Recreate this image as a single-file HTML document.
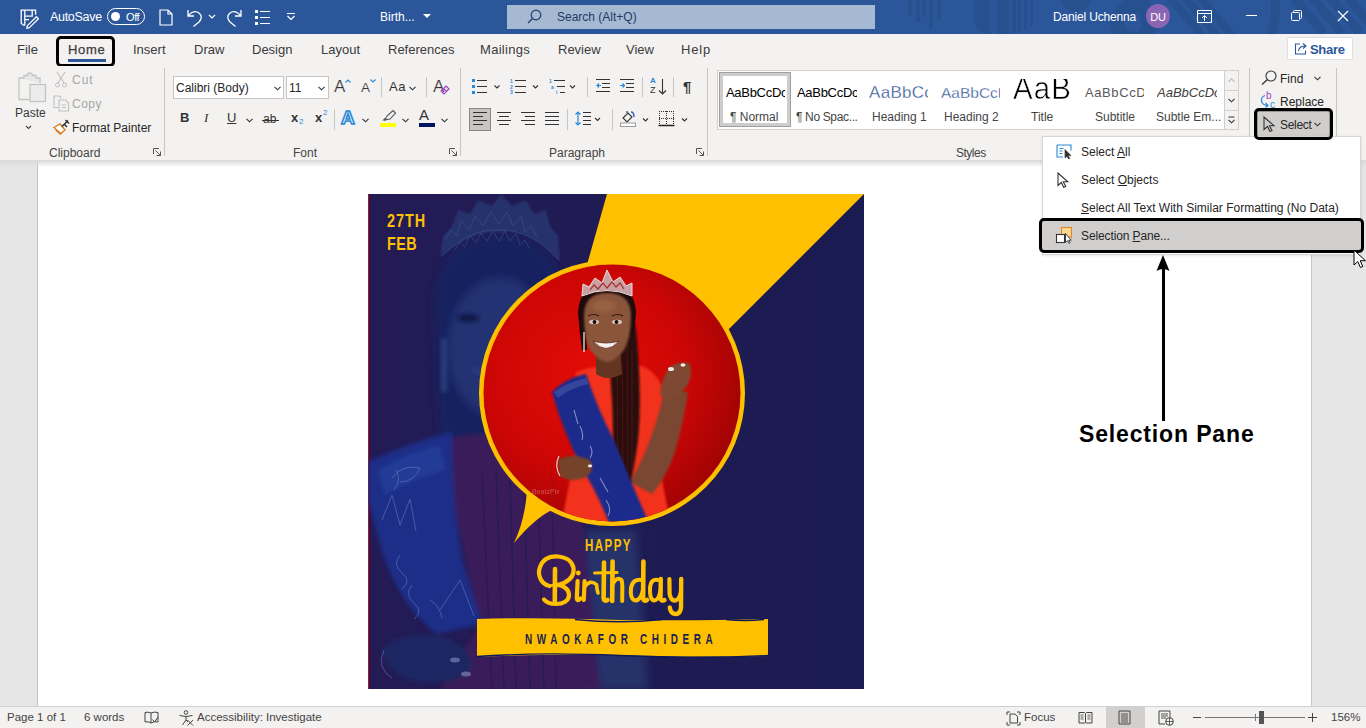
<!DOCTYPE html>
<html><head><meta charset="utf-8">
<style>
*{margin:0;padding:0;box-sizing:border-box}
html,body{width:1366px;height:728px;overflow:hidden;background:#e6e6e6;font-family:"Liberation Sans",sans-serif}
.a{position:absolute}
.t{position:absolute;white-space:nowrap;font-family:"Liberation Sans",sans-serif;font-size:12px;line-height:14px;color:#262626}
#title{left:0;top:0;width:1366px;height:34px;background:#2b579a;overflow:hidden}
#tabs{left:0;top:34px;width:1366px;height:32px;background:#f3f2f1}
#ribbon{left:0;top:66px;width:1366px;height:95px;background:#f3f2f1;border-bottom:1px solid #dadada}
#doc{left:0;top:161px;width:1366px;height:545px;background:#e6e6e6;overflow:hidden}
#page{left:37px;top:0;width:1275px;height:545px;background:#fff;border-left:1px solid #c6c6c6;border-right:1px solid #c6c6c6}
#status{left:0;top:706px;width:1366px;height:22px;background:#f3f2f1;border-top:1px solid #d0d0d0}
.w{color:#fff}
svg{position:absolute;overflow:visible}
</style></head><body>
<div id="title" class="a">
 <!-- pattern -->
 <div class="a" style="left:908px;top:0;width:4px;height:16px;background:#27508e"></div>
 <div class="a" style="left:916px;top:0;width:4px;height:22px;background:#27508e"></div>
 <div class="a" style="left:922px;top:0;width:4px;height:17px;background:#27508e"></div>
 <div class="a" style="left:929px;top:0;width:4px;height:29px;background:#27508e"></div>
 <div class="a" style="left:937px;top:0;width:4px;height:20px;background:#27508e"></div>
 <div class="a" style="left:974px;top:0;width:16px;height:34px;background:#27508e;border-radius:0 0 0 14px"></div>
 <div class="a" style="left:997px;top:0;width:12px;height:34px;background:#27508e"></div>
 <div class="a" style="left:1012px;top:0;width:4px;height:34px;background:#27508e"></div>
 <div class="a" style="left:1018px;top:0;width:3px;height:32px;background:#27508e"></div>
 <div class="a" style="left:1024px;top:0;width:3px;height:30px;background:#27508e"></div>
 <div class="a" style="left:1030px;top:0;width:3px;height:26px;background:#27508e"></div>
 <div class="a" style="left:1062px;top:-14px;width:28px;height:26px;border-radius:50%;background:#27508e"></div>
 <div class="a" style="left:1110px;top:-1px;width:47px;height:47px;border-radius:50%;border:14px solid #27508e"></div>
 <div class="a" style="left:1140px;top:-60px;width:140px;height:140px;border-radius:50%;border:9px solid #27508e"></div>
 <div class="a" style="left:1185px;top:-10px;width:8px;height:60px;background:#27508e;transform:rotate(-40deg)"></div>
 <div class="a" style="left:1200px;top:-10px;width:8px;height:60px;background:#27508e;transform:rotate(-40deg)"></div>
 <div class="a" style="left:1215px;top:-10px;width:8px;height:60px;background:#27508e;transform:rotate(-40deg)"></div>
 <div class="a" style="left:1300px;top:-20px;width:9px;height:60px;background:#27508e;transform:rotate(-40deg)"></div>
 <div class="a" style="left:1318px;top:-20px;width:9px;height:60px;background:#27508e;transform:rotate(-40deg)"></div>
 <div class="a" style="left:1336px;top:-20px;width:9px;height:60px;background:#27508e;transform:rotate(-40deg)"></div>
 <div class="a" style="left:1354px;top:-20px;width:9px;height:60px;background:#27508e;transform:rotate(-40deg)"></div>
 <!-- save icon -->
 <svg style="left:14px;top:4px" width="30" height="26" viewBox="0 0 30 26"><path d="M21.6 10.8V6.2H7.2V19.2L9.4 21.2H11.2M10.8 6.2V12.2H18.2V6.2M10.8 12.2V21M11 15.6H15" fill="none" stroke="#fff" stroke-width="1.3"/><path d="M13.4 21.6L22.4 12.8L24.4 14.8L15.4 23.6L12.8 24.4Z" fill="none" stroke="#fff" stroke-width="1.3" stroke-linejoin="round"/></svg>
 <div class="t w" style="left:50px;top:10px;font-size:12.5px;letter-spacing:-0.3px">AutoSave</div>
 <div class="a" style="left:107px;top:8px;width:38px;height:17px;border:1.2px solid #fff;border-radius:9px"></div>
 <div class="a" style="left:111px;top:12px;width:9px;height:9px;border-radius:50%;background:#fff"></div>
 <div class="t w" style="left:126px;top:10px;font-size:11px;letter-spacing:-0.4px">Off</div>
 <!-- new doc -->
 <svg style="left:159px;top:9px" width="14" height="17" viewBox="0 0 14 17"><path d="M1 1h8l4 4v11H1z M9 1v4h4" fill="none" stroke="#fff" stroke-width="1.2"/></svg>
 <!-- undo -->
 <svg style="left:187px;top:9px" width="16" height="18" viewBox="0 0 16 18"><path d="M1 1v6h6 M1.5 6.5 C4 2.5 9 1.5 12 4 C15 6.5 15 10 12 13 L6.5 17.5" fill="none" stroke="#fff" stroke-width="1.3"/></svg>
 <svg style="left:208px;top:14px" width="8" height="5" viewBox="0 0 8 5"><path d="M1 1l3 3 3-3" fill="none" stroke="#fff" stroke-width="1.2"/></svg>
 <!-- redo -->
 <svg style="left:226px;top:9px" width="16" height="18" viewBox="0 0 16 18"><path d="M15 1v6H9 M14.5 6.5 C12 2.5 7 1.5 4 4 C1 6.5 1 10 4 13 L9.5 17.5" fill="none" stroke="#fff" stroke-width="1.3"/></svg>
 <!-- list -->
 <svg style="left:254px;top:9px" width="17" height="17" viewBox="0 0 17 17"><path d="M1 1h3v3H1z M1 7h3v3H1z M1 13h3v3H1z" fill="#fff"/><path d="M6 2.5h10 M6 8.5h10 M6 14.5h10" stroke="#fff" stroke-width="1.2"/></svg>
 <svg style="left:286px;top:12px" width="10" height="9" viewBox="0 0 10 9"><path d="M1 1.5h8 M1.5 4l3.5 3.5 3.5-3.5" fill="none" stroke="#fff" stroke-width="1.2"/></svg>
 <div class="t w" style="left:380px;top:10px;font-size:12px">Birth...</div>
 <svg style="left:423px;top:14px" width="8" height="5" viewBox="0 0 8 5"><path d="M0 0h8L4 4z" fill="#fff"/></svg>
 <!-- search -->
 <div class="a" style="left:507px;top:5px;width:368px;height:24px;background:#a5b9d3"></div>
 <svg style="left:527px;top:9px" width="15" height="15" viewBox="0 0 15 15"><circle cx="9" cy="6" r="4.8" fill="none" stroke="#1e3d6e" stroke-width="1.2"/><path d="M5.5 9.5L1 14" stroke="#1e3d6e" stroke-width="1.3"/></svg>
 <div class="t" style="left:557px;top:10px;font-size:12px;color:#1f3a66">Search (Alt+Q)</div>
 <div class="t w" style="left:1053px;top:10px;font-size:12px;letter-spacing:-0.17px">Daniel Uchenna</div>
 <div class="a" style="left:1146px;top:4px;width:24px;height:24px;border-radius:50%;background:#8c64b4"></div>
 <div class="t w" style="left:1146px;top:10px;width:24px;text-align:center;font-size:11px;letter-spacing:-0.3px">DU</div>
 <svg style="left:1197px;top:10px" width="15" height="13" viewBox="0 0 15 13"><path d="M0.5 0.5h14v12H0.5z" fill="none" stroke="#fff" stroke-width="1"/><path d="M0.5 3.5h14" stroke="#fff" stroke-width="1"/><path d="M7.5 11V5.5M5 8l2.5-2.5L10 8" fill="none" stroke="#fff" stroke-width="1"/></svg>
 <div class="a" style="left:1246px;top:15px;width:11px;height:1px;background:#fff"></div>
 <svg style="left:1291px;top:10px" width="12" height="12" viewBox="0 0 12 12"><rect x="0.5" y="2.5" width="8" height="8" rx="1" fill="none" stroke="#fff" stroke-width="1"/><path d="M2.5 2.5V1.5a1 1 0 0 1 1-1h6a1 1 0 0 1 1 1v6a1 1 0 0 1-1 1H8.5" fill="none" stroke="#fff" stroke-width="1"/></svg>
 <svg style="left:1337px;top:10px" width="12" height="12" viewBox="0 0 12 12"><path d="M1 1l10 10M11 1L1 11" stroke="#fff" stroke-width="1.2"/></svg>
</div>
<div id="tabs" class="a">
 <div class="t" style="left:17px;top:9px;font-size:13px;color:#3b3b3b">File</div>
 <div class="t" style="left:68px;top:9px;font-size:13px;color:#3b3b3b;letter-spacing:0.7px;-webkit-text-stroke:0.25px #3b3b3b">Home</div>
 <div class="a" style="left:68px;top:25px;width:38px;height:3px;background:#2b579a"></div>
 <div class="a" style="left:56px;top:2px;width:59px;height:31px;border:3px solid #000;border-radius:5px"></div>
 <div class="t" style="left:133px;top:9px;font-size:13px;color:#3b3b3b">Insert</div>
 <div class="t" style="left:194px;top:9px;font-size:13px;color:#3b3b3b">Draw</div>
 <div class="t" style="left:252px;top:9px;font-size:13px;color:#3b3b3b">Design</div>
 <div class="t" style="left:321px;top:9px;font-size:13px;color:#3b3b3b">Layout</div>
 <div class="t" style="left:388px;top:9px;font-size:13px;color:#3b3b3b">References</div>
 <div class="t" style="left:480px;top:9px;font-size:13px;color:#3b3b3b;letter-spacing:0.3px">Mailings</div>
 <div class="t" style="left:558px;top:9px;font-size:13px;color:#3b3b3b">Review</div>
 <div class="t" style="left:626px;top:9px;font-size:13px;color:#3b3b3b">View</div>
 <div class="t" style="left:681px;top:9px;font-size:13px;color:#3b3b3b;letter-spacing:0.8px">Help</div>
 <div class="a" style="left:1287px;top:3px;width:66px;height:23px;background:#fff;border:1px solid #e1dfdd;border-radius:2px"></div>
 <svg style="left:1294px;top:8px" width="14" height="13" viewBox="0 0 14 13"><path d="M6 2H1.5v10h10V8.5" fill="none" stroke="#2b579a" stroke-width="1.1"/><path d="M4.5 9C5 5.5 7.5 4 11 4M9 1.5L12 4 9 6.5" fill="none" stroke="#2b579a" stroke-width="1.1"/></svg>
 <div class="t" style="left:1310px;top:9px;font-size:13px;color:#2b579a;font-weight:bold;letter-spacing:-0.3px">Share</div>
</div>
<div id="ribbon" class="a">
 <!-- Clipboard -->
 <svg style="left:17px;top:6px" width="30" height="31" viewBox="0 0 30 31"><path d="M2 6h5V3.5h3.5a2.5 2.5 0 0 1 5 0H19V6h4v5" fill="#e8e8e8" stroke="#c4c4c4" stroke-width="1.3"/><path d="M2 6v21.5h10" fill="none" stroke="#c4c4c4" stroke-width="1.3"/><rect x="13" y="12.5" width="15.5" height="17" fill="#ececec" stroke="#c4c4c4" stroke-width="1.3"/></svg>
 <div class="t" style="left:15px;top:40px;font-size:12px;color:#3a3a3a">Paste</div>
 <svg style="left:25px;top:59px" width="7" height="5" viewBox="0 0 7 5"><path d="M1 1l2.5 2.5L6 1" fill="none" stroke="#444" stroke-width="1.1"/></svg>
 <svg style="left:55px;top:5px" width="12" height="17" viewBox="0 0 12 17"><path d="M2 1l7 11M10 1L3 12" stroke="#c0c0c0" stroke-width="1.1" fill="none"/><circle cx="2.5" cy="14" r="2" fill="none" stroke="#c0c0c0"/><circle cx="9.5" cy="14" r="2" fill="none" stroke="#c0c0c0"/></svg>
 <div class="t" style="left:72px;top:7px;font-size:12px;color:#a6a6a6;letter-spacing:1px">Cut</div>
 <svg style="left:53px;top:29px" width="17" height="17" viewBox="0 0 17 17"><path d="M5 12.5H1V1h5.5l2 2" fill="none" stroke="#c0c0c0" stroke-width="1.1"/><path d="M6 5h6.5l3 3v8H6z M8.5 10h4.5M8.5 12.5h4.5" fill="none" stroke="#c0c0c0" stroke-width="1.1"/></svg>
 <div class="t" style="left:72px;top:31px;font-size:12px;color:#a6a6a6;letter-spacing:0.5px">Copy</div>
 <svg style="left:53px;top:53px" width="17" height="16" viewBox="0 0 17 16"><path d="M1 8.5L7 5l5 6-4.5 4z" fill="#fff" stroke="#e07b20" stroke-width="1.4"/><path d="M3 11l5 4" stroke="#e07b20" stroke-width="2"/><path d="M9 7.5L15 1.5M11 5l3 3" stroke="#333" stroke-width="1.5"/><path d="M12.5 1l3.5 3.5" stroke="#333" stroke-width="1.5"/></svg>
 <div class="t" style="left:72px;top:55px;font-size:12px;color:#262626">Format Painter</div>
 <div class="t" style="left:49px;top:80px;font-size:12px;color:#444">Clipboard</div>
 <svg style="left:153px;top:82px" width="8" height="8" viewBox="0 0 8 8"><path d="M0.5 6V0.5H6M2.5 2.5l5 5M7.5 3.5v4h-4" fill="none" stroke="#555" stroke-width="1"/></svg>
 <div class="a" style="left:164px;top:2px;width:1px;height:88px;background:#c8c6c4"></div>
 <!-- Font -->
 <div class="a" style="left:173px;top:10px;width:111px;height:23px;background:#fff;border:1px solid #c8c6c4"></div>
 <div class="t" style="left:176px;top:15px;font-size:12px;color:#262626">Calibri (Body)</div>
 <svg style="left:274px;top:20px" width="7" height="5" viewBox="0 0 7 5"><path d="M0.5 0.8l3 3 3-3" fill="none" stroke="#333" stroke-width="1.1"/></svg>
 <div class="a" style="left:286px;top:10px;width:43px;height:23px;background:#fff;border:1px solid #c8c6c4"></div>
 <div class="t" style="left:289px;top:15px;font-size:12px;color:#262626">11</div>
 <svg style="left:318px;top:20px" width="7" height="5" viewBox="0 0 7 5"><path d="M0.5 0.8l3 3 3-3" fill="none" stroke="#333" stroke-width="1.1"/></svg>
 <div class="t" style="left:334px;top:12px;font-size:17px;line-height:18px;color:#333;-webkit-text-stroke:0.2px #f3f2f1">A</div>
 <svg style="left:345px;top:13px" width="6" height="4" viewBox="0 0 6 4"><path d="M0.5 3.5L3 1l2.5 2.5" fill="none" stroke="#2b88d8" stroke-width="1.1"/></svg>
 <div class="t" style="left:361px;top:15px;font-size:13.5px;color:#333;-webkit-text-stroke:0.15px #f3f2f1">A</div>
 <svg style="left:370px;top:13px" width="6" height="4" viewBox="0 0 6 4"><path d="M0.5 0.5L3 3l2.5-2.5" fill="none" stroke="#2b88d8" stroke-width="1.1"/></svg>
 <div class="a" style="left:381px;top:11px;width:1px;height:20px;background:#c8c6c4"></div>
 <div class="t" style="left:389px;top:14px;font-size:13px;color:#333;letter-spacing:0.5px">Aa</div>
 <svg style="left:409px;top:20px" width="7" height="5" viewBox="0 0 7 5"><path d="M0.5 0.8l3 3 3-3" fill="none" stroke="#333" stroke-width="1.1"/></svg>
 <div class="a" style="left:426px;top:11px;width:1px;height:20px;background:#c8c6c4"></div>
 <div class="t" style="left:433px;top:12px;font-size:17px;line-height:18px;color:#333;-webkit-text-stroke:0.2px #f3f2f1">A</div>
 <svg style="left:440px;top:19px" width="10" height="10" viewBox="0 0 10 10"><path d="M6 1l3 3-5 5-3-3z M3.5 3.5l3 3" fill="none" stroke="#a33fbf" stroke-width="1.2"/></svg>
 <div class="t" style="left:180px;top:45px;font-size:13px;font-weight:bold;color:#333">B</div>
 <div class="t" style="left:204px;top:45px;font-size:13px;font-style:italic;color:#333;font-family:'Liberation Serif',serif">I</div>
 <div class="t" style="left:227px;top:45px;font-size:13px;color:#333;text-decoration:underline">U</div>
 <svg style="left:246px;top:52px" width="7" height="5" viewBox="0 0 7 5"><path d="M0.5 0.8l3 3 3-3" fill="none" stroke="#333" stroke-width="1.1"/></svg>
 <div class="t" style="left:263px;top:46px;font-size:12px;color:#333">ab</div>
 <div class="a" style="left:262px;top:54px;width:17px;height:1px;background:#333"></div>
 <div class="t" style="left:291px;top:45px;font-size:13px;color:#333;font-weight:bold">x</div>
 <div class="t" style="left:299px;top:52px;font-size:8px;color:#2b88d8;line-height:8px">2</div>
 <div class="t" style="left:315px;top:45px;font-size:13px;color:#333;font-weight:bold">x</div>
 <div class="t" style="left:323px;top:43px;font-size:8px;color:#2b88d8;line-height:8px">2</div>
 <div class="a" style="left:334px;top:43px;width:1px;height:21px;background:#c8c6c4"></div>
 <div class="t" style="left:341px;top:42px;font-size:19px;line-height:20px;font-weight:bold;color:#fff;-webkit-text-stroke:1.6px #2b88d8">A</div>
 <svg style="left:362px;top:52px" width="7" height="5" viewBox="0 0 7 5"><path d="M0.5 0.8l3 3 3-3" fill="none" stroke="#333" stroke-width="1.1"/></svg>
 <svg style="left:381px;top:44px" width="16" height="11" viewBox="0 0 16 11"><path d="M4 10l2-4 6-5.5 2.5 2.5L9 9z" fill="none" stroke="#555" stroke-width="1.1"/><path d="M1.5 10.5h3l1-1.5-2-1z" fill="#555"/></svg>
 <div class="a" style="left:380px;top:57px;width:16px;height:4px;background:#ffff00"></div>
 <svg style="left:402px;top:52px" width="7" height="5" viewBox="0 0 7 5"><path d="M0.5 0.8l3 3 3-3" fill="none" stroke="#333" stroke-width="1.1"/></svg>
 <div class="t" style="left:419px;top:42px;font-size:15px;color:#333">A</div>
 <div class="a" style="left:419px;top:57px;width:16px;height:4px;background:#001560"></div>
 <svg style="left:441px;top:52px" width="7" height="5" viewBox="0 0 7 5"><path d="M0.5 0.8l3 3 3-3" fill="none" stroke="#333" stroke-width="1.1"/></svg>
 <div class="t" style="left:293px;top:80px;font-size:12px;color:#444">Font</div>
 <svg style="left:449px;top:82px" width="8" height="8" viewBox="0 0 8 8"><path d="M0.5 6V0.5H6M2.5 2.5l5 5M7.5 3.5v4h-4" fill="none" stroke="#555" stroke-width="1"/></svg>
 <div class="a" style="left:460px;top:2px;width:1px;height:88px;background:#c8c6c4"></div>
 <!-- Paragraph -->
 <svg style="left:471px;top:12px" width="30" height="16" viewBox="0 0 30 16"><path d="M1 1h3v3H1zM1 7h3v3H1zM1 13h3v3H1z" fill="#2b88d8"/><path d="M6 2.5h10M6 8.5h10M6 14.5h10" stroke="#333" stroke-width="1"/><path d="M23.5 7.5l2.5 2.5 2.5-2.5" fill="none" stroke="#333" stroke-width="1.1"/></svg>
 <svg style="left:510px;top:12px" width="30" height="16" viewBox="0 0 30 16"><text x="0" y="5" font-size="5" fill="#2b88d8" font-family="Liberation Sans" font-weight="bold">1</text><text x="0" y="10.5" font-size="5" fill="#2b88d8" font-family="Liberation Sans" font-weight="bold">2</text><text x="0" y="16" font-size="5" fill="#2b88d8" font-family="Liberation Sans" font-weight="bold">3</text><path d="M5 2.5h11M5 8.5h11M5 14.5h11" stroke="#333" stroke-width="1"/><path d="M23 7.5l2.5 2.5 2.5-2.5" fill="none" stroke="#333" stroke-width="1.1"/></svg>
 <svg style="left:549px;top:12px" width="30" height="16" viewBox="0 0 30 16"><text x="0" y="5" font-size="5" fill="#2b88d8" font-family="Liberation Sans" font-weight="bold">1</text><text x="2" y="11" font-size="5" fill="#2b88d8" font-family="Liberation Sans" font-weight="bold">a</text><text x="7" y="16" font-size="5" fill="#2b88d8" font-family="Liberation Sans" font-weight="bold">i</text><path d="M5 2.5h11M8 8.5h8M11 14.5h5" stroke="#333" stroke-width="1"/><path d="M21 7.5l2.5 2.5 2.5-2.5" fill="none" stroke="#333" stroke-width="1.1"/></svg>
 <div class="a" style="left:587px;top:11px;width:1px;height:20px;background:#c8c6c4"></div>
 <svg style="left:596px;top:13px" width="15" height="14" viewBox="0 0 15 14"><path d="M0 0.5h14M6 4.5h8M6 8.5h8M0 12.5h14" stroke="#333" stroke-width="1"/><path d="M5 6.5H1M3 4.5L1 6.5l2 2" fill="none" stroke="#2b88d8" stroke-width="1.2"/></svg>
 <svg style="left:620px;top:13px" width="15" height="14" viewBox="0 0 15 14"><path d="M0 0.5h14M6 4.5h8M6 8.5h8M0 12.5h14" stroke="#333" stroke-width="1"/><path d="M0 6.5h4.5M2.5 4.5l2 2-2 2" fill="none" stroke="#2b88d8" stroke-width="1.2"/></svg>
 <div class="a" style="left:642px;top:11px;width:1px;height:20px;background:#c8c6c4"></div>
 <div class="t" style="left:650px;top:11px;font-size:8px;line-height:8px;color:#2b88d8;font-weight:bold">A</div>
 <div class="t" style="left:650px;top:20px;font-size:9px;line-height:9px;color:#333">Z</div>
 <svg style="left:658px;top:13px" width="9" height="16" viewBox="0 0 9 16"><path d="M4.5 0v15M1 11.5l3.5 3.5 3.5-3.5" fill="none" stroke="#333" stroke-width="1.1"/></svg>
 <div class="a" style="left:673px;top:11px;width:1px;height:20px;background:#c8c6c4"></div>
 <div class="t" style="left:683px;top:13px;font-size:15px;line-height:15px;color:#333;font-weight:bold">¶</div>
 <div class="a" style="left:469px;top:42px;width:22px;height:23px;background:#c8c6c4;border:1px solid #8a8886"></div>
 <svg style="left:473px;top:46px" width="100" height="14" viewBox="0 0 100 14"><path d="M0 0.5h14M0 4.5h10M0 8.5h14M0 12.5h10" stroke="#333" stroke-width="1"/><path d="M24 0.5h14M26 4.5h10M24 8.5h14M26 12.5h10" stroke="#333" stroke-width="1"/><path d="M48 0.5h14M52 4.5h10M48 8.5h14M52 12.5h10" stroke="#333" stroke-width="1"/><path d="M72 0.5h14M72 4.5h14M72 8.5h14M72 12.5h14" stroke="#333" stroke-width="1"/></svg>
 <div class="a" style="left:567px;top:43px;width:1px;height:21px;background:#c8c6c4"></div>
 <svg style="left:574px;top:45px" width="28" height="16" viewBox="0 0 28 16"><path d="M4 1v13M1.5 3.5L4 1l2.5 2.5M1.5 11.5L4 14l2.5-2.5" fill="none" stroke="#2b88d8" stroke-width="1.2"/><path d="M9 1.5h8M9 5.5h8M9 9.5h8M9 13.5h8" stroke="#333" stroke-width="1"/><path d="M21 7l2.5 2.5L26 7" fill="none" stroke="#333" stroke-width="1.1"/></svg>
 <div class="a" style="left:612px;top:43px;width:1px;height:21px;background:#c8c6c4"></div>
 <svg style="left:619px;top:44px" width="32" height="18" viewBox="0 0 32 18"><path d="M4 8l5-5 4 4-5 5z" fill="none" stroke="#333" stroke-width="1.1"/><path d="M8 3V1" stroke="#333" stroke-width="1.1"/><path d="M12 2c2 0 3 2 3 5" fill="none" stroke="#2b6cb8" stroke-width="1.5"/><rect x="1.5" y="13" width="15" height="3.5" fill="#fff" stroke="#999" stroke-width="1"/><path d="M24 8.5l2.5 2.5L29 8.5" fill="none" stroke="#333" stroke-width="1.1"/></svg>
 <svg style="left:658px;top:44px" width="32" height="18" viewBox="0 0 32 18"><path d="M1 1.5h15M1.5 1v14M15.5 1v14M1 8.5h15M8.5 1v14" fill="none" stroke="#333" stroke-width="1" stroke-dasharray="1 1"/><path d="M0.5 15.5h16" stroke="#222" stroke-width="1.5"/><path d="M24 8.5l2.5 2.5L29 8.5" fill="none" stroke="#333" stroke-width="1.1"/></svg>
 <div class="t" style="left:549px;top:80px;font-size:12px;color:#444">Paragraph</div>
 <svg style="left:696px;top:82px" width="8" height="8" viewBox="0 0 8 8"><path d="M0.5 6V0.5H6M2.5 2.5l5 5M7.5 3.5v4h-4" fill="none" stroke="#555" stroke-width="1"/></svg>
 <div class="a" style="left:707px;top:2px;width:1px;height:88px;background:#c8c6c4"></div>
 <!-- Styles -->
 <div class="a" style="left:717px;top:4px;width:522px;height:60px;background:#fff;border:1px solid #d2d0ce"></div>
 <div class="a" style="left:719px;top:6px;width:72px;height:55px;border:1px solid #a19f9d;background:#fff"></div>
 <div class="a" style="left:720px;top:7px;width:70px;height:53px;border:3px solid #cfcdcb"></div>
 <div class="t" style="left:726px;top:20px;font-size:13px;color:#000;width:59px;overflow:hidden;letter-spacing:-0.3px">AaBbCcDc</div>
 <div class="t" style="left:730px;top:44px;font-size:12px;color:#444">¶ Normal</div>
 <div class="t" style="left:797px;top:20px;font-size:13px;color:#000;width:60px;overflow:hidden;letter-spacing:-0.3px">AaBbCcDc</div>
 <div class="t" style="left:796px;top:44px;font-size:12px;color:#444;letter-spacing:-0.35px">¶ No Spac...</div>
 <div class="t" style="left:869px;top:18px;font-size:17px;line-height:18px;color:#2f5496;width:59px;overflow:hidden;-webkit-text-stroke:0.3px #fff;letter-spacing:0.3px">AaBbCc</div>
 <div class="t" style="left:872px;top:44px;font-size:12px;color:#444">Heading 1</div>
 <div class="t" style="left:941px;top:18px;font-size:15.5px;line-height:17px;color:#2f5496;width:59px;overflow:hidden;-webkit-text-stroke:0.3px #fff">AaBbCcD</div>
 <div class="t" style="left:944px;top:44px;font-size:12px;color:#444">Heading 2</div>
 <div class="a" style="left:1010px;top:13px;width:64px;height:22px;overflow:hidden"><div class="t" style="left:3px;top:-7px;font-size:32px;line-height:32px;color:#000;letter-spacing:1.2px;transform:scaleX(0.92);transform-origin:0 0;-webkit-text-stroke:0.6px #fff">AaB</div></div>
 <div class="t" style="left:1031px;top:44px;font-size:12px;color:#444">Title</div>
 <div class="t" style="left:1085px;top:20px;font-size:13px;color:#595959;letter-spacing:0.6px;width:59px;overflow:hidden">AaBbCcD</div>
 <div class="t" style="left:1095px;top:44px;font-size:12px;color:#444">Subtitle</div>
 <div class="t" style="left:1157px;top:20px;font-size:13px;color:#404040;font-style:italic;width:60px;overflow:hidden">AaBbCcDc</div>
 <div class="t" style="left:1156px;top:44px;font-size:12px;color:#444">Subtle Em...</div>
 <div class="a" style="left:1224px;top:4px;width:15px;height:60px;background:#f3f2f1;border:1px solid #d2d0ce"></div>
 <div class="a" style="left:1224px;top:24px;width:15px;height:1px;background:#d2d0ce"></div>
 <div class="a" style="left:1224px;top:44px;width:15px;height:1px;background:#d2d0ce"></div>
 <svg style="left:1228px;top:12px" width="7" height="5" viewBox="0 0 7 5"><path d="M0.5 3.8l3-3 3 3" fill="none" stroke="#bbb" stroke-width="1.1"/></svg>
 <svg style="left:1228px;top:32px" width="7" height="5" viewBox="0 0 7 5"><path d="M0.5 0.8l3 3 3-3" fill="none" stroke="#333" stroke-width="1.1"/></svg>
 <svg style="left:1228px;top:50px" width="7" height="8" viewBox="0 0 7 8"><path d="M0.5 1h6M0.5 3.8l3 3 3-3" fill="none" stroke="#333" stroke-width="1.1"/></svg>
 <div class="t" style="left:956px;top:80px;font-size:12px;color:#444;letter-spacing:-0.5px">Styles</div>
 <div class="a" style="left:1249px;top:2px;width:1px;height:88px;background:#c8c6c4"></div>
 <!-- Editing -->
 <svg style="left:1261px;top:4px" width="16" height="15" viewBox="0 0 16 15"><circle cx="10" cy="6" r="5" fill="none" stroke="#333" stroke-width="1.1"/><path d="M6.5 9.5L1 14.5" stroke="#333" stroke-width="1.3"/></svg>
 <div class="t" style="left:1280px;top:6px;font-size:12px;color:#262626">Find</div>
 <svg style="left:1314px;top:10px" width="7" height="5" viewBox="0 0 7 5"><path d="M0.5 0.8l3 3 3-3" fill="none" stroke="#333" stroke-width="1.1"/></svg>
 <svg style="left:1259px;top:25px" width="20" height="18" viewBox="0 0 20 18"><text x="7" y="8" font-family="Liberation Sans" font-size="10" fill="#a33fbf">b</text><text x="11" y="16.5" font-family="Liberation Sans" font-size="10" fill="#2b88d8">c</text><path d="M6 4.5Q2 6 2.5 10Q3 14 8.5 14.5" fill="none" stroke="#2b88d8" stroke-width="1.3"/><path d="M6.5 12l2.5 2.5-2.5 2" fill="none" stroke="#2b88d8" stroke-width="1.2"/></svg>
 <div class="t" style="left:1280px;top:29px;font-size:12px;color:#262626">Replace</div>
 <div class="a" style="left:1257px;top:45px;width:73px;height:26px;background:#cfcecd;border:1px solid #9a9896"></div>
 <svg style="left:1263px;top:50px" width="13" height="16" viewBox="0 0 13 16"><path d="M1 1v12.5l3.5-3 2.5 5 2-1-2.5-4.8h4.5z" fill="none" stroke="#333" stroke-width="1.1"/></svg>
 <div class="t" style="left:1280px;top:52px;font-size:12px;color:#262626;letter-spacing:-0.3px">Select</div>
 <svg style="left:1314px;top:56px" width="7" height="5" viewBox="0 0 7 5"><path d="M0.5 0.8l3 3 3-3" fill="none" stroke="#333" stroke-width="1.1"/></svg>
 <div class="a" style="left:1336px;top:2px;width:1px;height:88px;background:#c8c6c4"></div>
</div>
<div id="doc" class="a"><div id="page" class="a"></div>
 <div class="a" style="left:0;top:0;width:1366px;height:6px;background:linear-gradient(#dcdcdc,rgba(255,255,255,0))"></div>
</div>
<svg style="left:368px;top:194px" width="496" height="495" viewBox="368 194 496 495">
 <defs>
  <filter id="b2" x="-20%" y="-20%" width="140%" height="140%"><feGaussianBlur stdDeviation="2"/></filter>
  <filter id="b4" x="-30%" y="-30%" width="160%" height="160%"><feGaussianBlur stdDeviation="4"/></filter>
  <filter id="b8" x="-50%" y="-50%" width="200%" height="200%"><feGaussianBlur stdDeviation="8"/></filter>
  <filter id="b1"><feGaussianBlur stdDeviation="0.8"/></filter>
  <radialGradient id="red" cx="0.4" cy="0.42" r="0.7"><stop offset="0" stop-color="#e20c06"/><stop offset="0.55" stop-color="#cc0605"/><stop offset="1" stop-color="#960204"/></radialGradient>
  <linearGradient id="navy" x1="0" y1="0" x2="1" y2="0"><stop offset="0" stop-color="#241b55"/><stop offset="1" stop-color="#1a1b51"/></linearGradient>
  <clipPath id="circ"><circle cx="612" cy="393" r="128.5"/></clipPath>
  <clipPath id="poster"><rect x="368" y="194" width="496" height="495"/></clipPath>
 </defs>
 <g clip-path="url(#poster)">
 <rect x="368" y="194" width="496" height="495" fill="url(#navy)"/>
 <!-- ghost photo -->
 <rect x="368" y="194" width="1" height="495" fill="#b01020"/>
 <g filter="url(#b4)">
  <path d="M434 310 Q434 240 500 234 Q562 240 562 300 L562 450 L440 450z" fill="#19245e"/>
  <ellipse cx="500" cy="348" rx="52" ry="70" fill="#223272"/>
  <path d="M584 530 L636 530 L648 690 L582 690z" fill="#26336a"/>
 </g>
 <g filter="url(#b2)">
  <path d="M440 440 Q500 425 575 445 L600 690 L440 690 L480 625z" fill="#3a1d5a"/>
  <path d="M368 462 Q410 442 452 432 Q452 500 462 560 L482 624 L437 634 Q398 605 380 545 L368 500z" fill="#1a2e88"/>
  <path d="M378 470 Q410 452 440 445 L445 470 Q410 480 385 495z" fill="#2a44a0" opacity="0.6"/>
  <path d="M382 650 Q400 630 440 636 Q470 645 472 668 Q460 685 420 682 Q388 678 382 650z" fill="#1c2662"/>
 </g>
 <g filter="url(#b1)">
  <path d="M440 258 L443 236 L452 226 L458 210 L470 214 L478 200 L492 206 L501 194 L512 206 L526 200 L534 214 L546 210 L550 226 L558 236 L560 262 Q530 228 501 232 Q470 230 440 258z" fill="#26326c"/>
 </g>
 <g opacity="0.5" fill="none" stroke="#3f5a98" stroke-width="1">
  <path d="M442 256 Q470 228 501 230 Q532 230 559 260"/>
  <path d="M445 240 l6-10 6 6 4-16 8 10 6-14 8 10 8-14 8 12 8-12 6 14 8-10 4 16 6-6 6 12"/>
  <path d="M455 250 l5-8 5 5 5-12 6 8 5-10 6 8 6-10 6 10 6-10 5 10 6-8 4 12 5-5 4 8"/>
 </g>
 <g filter="url(#b2)">
  <ellipse cx="468" cy="318" rx="11" ry="3.5" fill="#0f1640"/>
  <path d="M472 368 Q490 380 506 368" fill="none" stroke="#2b3c84" stroke-width="4"/>
  <path d="M444 338 L444 392" stroke="#2f4280" stroke-width="5"/>
 </g>
 <g opacity="0.45" fill="none" stroke="#8090c8" stroke-width="1">
  <path d="M392 478 q10-14 28-10 q-6 14 -20 14 M396 470 q6 10 -2 20"/>
  <path d="M382 520 l10-25 8 30 10-26 6 32"/>
  <path d="M400 555 q-8 10 2 18 q10 8 0 16"/>
  <path d="M412 585 q-8 10 2 18 q10 8 0 16"/>
  <path d="M430 600 q10 6 12 18"/>
  <path d="M384 650 q-8 18 8 28"/>
  <path d="M440 610 l20-30 14 36"/>
 </g>
 <g opacity="0.55" stroke="#1a1c4c" stroke-width="1.6">
  <path d="M482 470 L492 690 M496 470 L504 690 M510 478 L516 690 M524 480 L530 690 M538 486 L544 690 M552 490 L556 690"/>
 </g>
 <g fill="#8890c0" opacity="0.6"><ellipse cx="455" cy="660" rx="5" ry="2.5"/><ellipse cx="466" cy="674" rx="5" ry="2.5"/></g>
 <!-- yellow shape -->
 <path d="M607 194 L864 194 L700 358 L560 360 Z" fill="#ffc000"/>
 <!-- tail -->
 <path d="M527 490 Q525 520 514 543 Q535 518 552 510 Z" fill="#ffc000"/>
 <!-- circle -->
 <circle cx="612" cy="393" r="133" fill="#ffc000"/>
 <circle cx="612" cy="393" r="128.5" fill="url(#red)"/>
 <g clip-path="url(#circ)">
  <!-- dress -->
  <path d="M576 372 Q605 362 642 366 Q662 374 666 402 L660 470 L672 530 L560 530 L578 440 Q572 400 576 372z" fill="#f2301a" filter="url(#b1)"/>
  <path d="M552 460 Q556 500 560 530 L545 530z" fill="#b00808" opacity="0.5"/>
  <!-- forearm -->
  <path d="M630 482 Q646 455 656 422 Q662 404 664 388 L688 392 Q684 420 675 452 Q665 480 652 494z" fill="#7a4630" filter="url(#b1)"/>
  <!-- hand -->
  <path d="M660 394 Q662 376 670 367 Q680 360 690 364 Q693 374 687 386 Q679 397 668 400z" fill="#7e4a32" filter="url(#b1)"/>
  <ellipse cx="671" cy="369" rx="3" ry="2" fill="#f0e8e8"/>
  <ellipse cx="683" cy="365" rx="2.5" ry="1.8" fill="#f0e8e8"/>
  <!-- braids -->
  <path d="M614 300 Q634 300 637 340 Q642 400 638 440 Q634 470 630 484 L612 482 Q614 440 612 400 Q608 360 614 300z" fill="#2a0e0c" filter="url(#b1)"/>
  <g stroke="#6a1a14" stroke-width="0.8" opacity="0.7"><path d="M617 350 L618 470 M622 345 L623 478 M627 345 L628 480 M632 350 L632 470"/></g>
  <path d="M582 300 Q578 325 582 350 L587 350 Q585 325 589 300z" fill="#1e0c0a"/>
  <!-- sash -->
  <path d="M552 392 Q566 378 586 374 Q598 410 614 440 Q630 480 652 530 L612 530 Q596 490 584 472 Q562 430 552 392z" fill="#1b2c8c" filter="url(#b1)"/>
  <path d="M554 392 Q568 382 586 378 L588 384 Q570 388 558 398z" fill="#4a5aa8" opacity="0.6"/>
  <path d="M574 410 l4 14 M580 426 q4 8 2 14 M590 446 q4 6 0 12 M600 478 l8 14 M606 500 q6 8 2 16" fill="none" stroke="#b4b8d0" stroke-width="1.1" opacity="0.7"/>
  <!-- hand on sash -->
  <path d="M558 460 Q572 452 590 460 Q596 470 586 477 Q572 484 560 476z" fill="#74432c" filter="url(#b1)"/>
  <path d="M559 456 Q554 466 560 476" fill="none" stroke="#d8d0d0" stroke-width="1.2"/>
  <ellipse cx="590" cy="466" rx="2.2" ry="1.4" fill="#f0e8e8"/>
  <!-- neck -->
  <path d="M596 346 L620 346 L622 374 Q608 382 596 374z" fill="#643622"/>
  <!-- hair cap -->
  <path d="M578 312 Q580 283 607 283 Q634 283 636 312 L634 335 L580 335z" fill="#1c0b0a"/>
  <!-- face -->
  <path d="M584 316 Q584 293 607 293 Q631 293 631 316 Q631 338 624 350 Q614 362 607 362 Q600 362 590 350 Q584 338 584 316z" fill="#8a553a" filter="url(#b1)"/>
  <ellipse cx="604" cy="306" rx="12" ry="6" fill="#a36a4a" opacity="0.6" filter="url(#b2)"/>
  <path d="M593 341 Q606 356 619 341 Q606 345 593 341z" fill="#f6f2ee" stroke="#5a2a20" stroke-width="0.8"/>
  <ellipse cx="594" cy="322" rx="5" ry="2.2" fill="#d8c4bc"/>
  <ellipse cx="617" cy="322" rx="5" ry="2.2" fill="#d8c4bc"/>
  <circle cx="594.5" cy="322" r="1.9" fill="#1a0a08"/>
  <circle cx="616.5" cy="322" r="1.9" fill="#1a0a08"/>
  <path d="M588 316 q6-3 11 0 M612 316 q6-3 11 0" fill="none" stroke="#2a140e" stroke-width="1.2"/>
  <path d="M584 332 L584 352" stroke="#c8c0c0" stroke-width="1.6"/>
  <!-- crown -->
  <path d="M582 296 L583 284 L589 287 L595 278 L602 283 L607 270 L613 282 L620 277 L626 286 L632 283 L632 296 Q607 285 582 296z" fill="#c9a0a4" stroke="#efdcdc" stroke-width="1"/>
  <path d="M590 290 l4-5 4 4 5-6 4 5 5-6 4 5 4-4 4 6" fill="none" stroke="#a03030" stroke-width="1.2"/>
  <!-- watermark -->
  <text x="532" y="494" font-family="Liberation Sans" font-size="7" fill="#e88a80" opacity="0.6">BeatzPix</text>
 </g>
 <!-- date -->
 <text x="387" y="227" font-family="Liberation Sans" font-weight="bold" font-size="18" fill="#ffc000" transform="translate(387 227) scale(0.8 1) translate(-387 -227)" letter-spacing="1.2">27TH</text>
 <text x="387" y="250" font-family="Liberation Sans" font-weight="bold" font-size="18" fill="#ffc000" transform="translate(387 250) scale(0.8 1) translate(-387 -250)" letter-spacing="0.6">FEB</text>
 <!-- HAPPY -->
 <text x="585" y="551" font-family="Liberation Sans" font-weight="bold" font-size="16" fill="#ffc000" transform="translate(585 551) scale(0.72 1) translate(-585 -551)" letter-spacing="2">HAPPY</text>
 <!-- Birthday -->
 <g fill="none" stroke="#ffc000" stroke-linecap="round" stroke-linejoin="round">
  <path stroke-width="4.2" d="M549.5 586 C541 584 537 575 540 567 C543 559 550 556 558 556.5 C566 557 572 561 573.5 568 C574.5 575 570 580 564 583 C561 584.5 558 585 556 585 C563 585 569 589 569 595 C569 601 563 604 556 604 C550 604 546 602 544 599.5"/>
  <path stroke-width="4.6" d="M555 569 L554.8 601"/>
  <path stroke-width="2.6" d="M551 585.5 L558 584.5"/>
  <circle cx="578.3" cy="573" r="2.4" fill="#ffc000" stroke="none"/>
  <path stroke-width="4.2" d="M577.6 581 L576.8 598 Q577 602 580.5 598.5"/>
  <path stroke-width="4.2" d="M584.6 581 L583.8 600"/>
  <path stroke-width="3.6" d="M584.5 587 Q590 579 596.5 584.5 Q597 590 598 593"/>
  <path stroke-width="4.6" d="M604 562.5 L603.6 598 Q604 602 607.5 600"/>
  <path stroke-width="3.0" d="M594.5 573 L617 572.5"/>
  <path stroke-width="4.6" d="M612.6 561.5 L612.2 601"/>
  <path stroke-width="4.0" d="M612.6 584 Q617 576 621.5 580 Q622.5 583 622.3 590 L622.2 601"/>
  <path stroke-width="4.0" d="M642.3 580 Q633 578 631 588 Q630 600 635.5 600.5 Q641 600 643 590"/>
  <path stroke-width="4.6" d="M643.4 561.5 L643.1 598 Q643.5 602 647 600"/>
  <path stroke-width="4.0" d="M658 580 Q651 578 650 588 Q649.5 600 654.5 600.5 Q659 600 660.5 590"/>
  <path stroke-width="4.4" d="M660.8 579 L660.5 598 Q661 602 664.5 600"/>
  <path stroke-width="4.2" d="M669.4 579 L669.6 594 Q671 601 675.5 600.5 Q680 599 681 591"/>
  <path stroke-width="4.4" d="M681.2 579 L681 607.5 Q680.5 614 675.5 614 Q670.5 613.5 669.8 607.5"/>
 </g>
 <!-- banner -->
 <path d="M477 619 Q540 617 620 620 Q700 621 768 619 L768 656 Q700 658 620 655 Q540 654 477 657z" fill="#ffc000"/>
 <path d="M575 619.5 Q620 624 662 619.5 M726 619.5 Q745 621.5 764 619.5 M477 656.5 Q540 652 620 655.5 Q700 659 768 655.5" fill="none" stroke="#0f1a5a" stroke-width="1.3"/>
 <text x="525" y="644" font-family="Liberation Sans" font-weight="bold" font-size="15.5" fill="#1a1f50" transform="translate(525 644) scale(0.64 1) translate(-525 -644)" letter-spacing="7.2">NWAOKAFOR CHIDERA</text>
 </g>
</svg>
<!-- dropdown -->
<div class="a" style="left:1042px;top:136px;width:319px;height:119px;background:#fff;border:1px solid #d6d6d6;box-shadow:0 1px 3px rgba(0,0,0,0.10)"></div>
<svg style="left:1056px;top:144px" width="17" height="15" viewBox="0 0 17 15"><path d="M1 1h14v5.5M1 1v12h6" fill="none" stroke="#2b88d8" stroke-width="1.1"/><path d="M3.5 4.5h4M3.5 7h3M3.5 9.5h3" stroke="#2b88d8" stroke-width="1"/><path d="M9 5.5v8.5l2-1.8 1.5 2.8 1.2-.6-1.4-2.8h2.7z" fill="#333" stroke="#333" stroke-width="0.6"/></svg>
<div class="t" style="left:1081px;top:145px;font-size:12px;color:#262626">Select <u>A</u>ll</div>
<svg style="left:1057px;top:172px" width="13" height="16" viewBox="0 0 13 16"><path d="M1 1v12.5l3.3-3 2.4 4.8 2-.9-2.4-4.6h4.5z" fill="#fff" stroke="#333" stroke-width="1.1"/></svg>
<div class="t" style="left:1081px;top:173px;font-size:12px;color:#262626">Select <u>O</u>bjects</div>
<div class="t" style="left:1081px;top:201px;font-size:12px;color:#262626"><u>S</u>elect All Text With Similar Formatting (No Data)</div>
<div class="a" style="left:1039px;top:218px;width:325px;height:35px;border:3px solid #000;border-radius:5px;background:#d0cfce"></div>
<svg style="left:1055px;top:226px" width="18" height="18" viewBox="0 0 18 18"><rect x="6.5" y="1.5" width="10" height="9.5" fill="#fbd890" stroke="#e8821e" stroke-width="1.1"/><rect x="1.5" y="8.5" width="8" height="8" fill="#fff" stroke="#333" stroke-width="1.1"/><path d="M10.5 7.5v9l2-1.8 1.5 2.6 1.1-.6-1.4-2.5h2.6z" fill="#fff" stroke="#333" stroke-width="0.9"/></svg>
<div class="t" style="left:1081px;top:229px;font-size:12px;color:#262626;letter-spacing:-0.12px">Selection <u>P</u>ane...</div>
<div class="a" style="left:1254px;top:108px;width:79px;height:32px;border:3px solid #000;border-radius:5px"></div>
<!-- mouse cursor -->
<svg style="left:1353px;top:249px" width="13" height="20" viewBox="0 0 13 20"><path d="M1 1v15l3.8-3.5 2.6 6 2.4-1-2.6-5.8h5.2z" fill="#fff" stroke="#000" stroke-width="1"/></svg>
<!-- annotation -->
<div class="a" style="left:1161.5px;top:266px;width:3px;height:155px;background:#000"></div>
<svg style="left:1156px;top:255px" width="14" height="16" viewBox="0 0 14 16"><path d="M7 0L13.5 16Q7 12 0.5 16z" fill="#000"/></svg>
<div class="t" style="left:1079px;top:421px;font-size:23px;line-height:26px;font-weight:bold;color:#000;letter-spacing:0.85px">Selection Pane</div>
<div id="status" class="a">
 <div class="t" style="left:7px;top:3px;font-size:11.5px;color:#444">Page 1 of 1</div>
 <div class="t" style="left:84px;top:3px;font-size:11.5px;color:#444">6 words</div>
 <svg style="left:144px;top:4px" width="15" height="14" viewBox="0 0 15 14"><path d="M1 1.5Q4 0.5 7 2Q10 0.5 14 1.5V11Q10 10 7 12Q4 10 1 11z M7 2v10" fill="none" stroke="#444" stroke-width="1"/><path d="M8.5 8.5l2 2.5 3.5-5" fill="none" stroke="#444" stroke-width="1"/></svg>
 <svg style="left:178px;top:3px" width="17" height="16" viewBox="0 0 17 16"><circle cx="8" cy="2.5" r="1.8" fill="none" stroke="#444" stroke-width="1"/><path d="M1.5 5.5l6.5 1 6.5-1M8 6.5v3.5l-3.5 5M8 10l2 2" fill="none" stroke="#444" stroke-width="1"/><path d="M9.5 10l5.5 5.5M15 10l-5.5 5.5" stroke="#444" stroke-width="1"/></svg>
 <div class="t" style="left:197px;top:3px;font-size:11.5px;color:#444">Accessibility: Investigate</div>
 <svg style="left:1006px;top:4px" width="15" height="15" viewBox="0 0 15 15"><path d="M1 4V1h3M11 1h3v3M14 11v3h-3M4 14H1v-3" fill="none" stroke="#444" stroke-width="1"/><path d="M4 3h5l2.5 2.5V12H4z" fill="none" stroke="#444" stroke-width="1"/></svg>
 <div class="t" style="left:1024px;top:3px;font-size:11.5px;color:#444">Focus</div>
 <svg style="left:1078px;top:4px" width="15" height="13" viewBox="0 0 15 13"><path d="M1 1.5h5.5l1 1 1-1H14V12H8.5l-1 -0.5L6.5 12H1z M7.5 2.5v9" fill="none" stroke="#444" stroke-width="1"/><path d="M2.5 4h3M2.5 6h3M2.5 8h3M9.5 4h3M9.5 6h3M9.5 8h3" stroke="#444" stroke-width="0.8"/></svg>
 <div class="a" style="left:1106px;top:0px;width:39px;height:21px;background:#d2d0ce"></div>
 <svg style="left:1118px;top:3px" width="13" height="15" viewBox="0 0 13 15"><path d="M1 1h11v13H1z" fill="none" stroke="#444" stroke-width="1"/><path d="M3 4h7M3 6h7M3 8h7M3 10h7M3 12h7" stroke="#444" stroke-width="0.9"/></svg>
 <svg style="left:1158px;top:3px" width="16" height="16" viewBox="0 0 16 16"><path d="M1 1h11v8M1 1v13h6" fill="none" stroke="#444" stroke-width="1"/><path d="M3 4h7M3 6h7M3 8h5" stroke="#444" stroke-width="0.9"/><circle cx="11.5" cy="11.5" r="3.8" fill="#f3f2f1" stroke="#444" stroke-width="1"/><path d="M7.7 11.5h7.6M11.5 7.7v7.6" stroke="#444" stroke-width="0.8"/></svg>
 <div class="a" style="left:1193px;top:10px;width:8px;height:1px;background:#444"></div>
 <div class="a" style="left:1205px;top:10px;width:100px;height:1px;background:#777"></div>
 <div class="a" style="left:1255px;top:7px;width:1px;height:7px;background:#777"></div>
 <div class="a" style="left:1259px;top:4px;width:5px;height:13px;background:#555"></div>
 <div class="a" style="left:1308px;top:10px;width:9px;height:1px;background:#444"></div>
 <div class="a" style="left:1312px;top:6px;width:1px;height:9px;background:#444"></div>
 <div class="t" style="left:1331px;top:3px;font-size:11.5px;color:#444">156%</div>
</div>
</body></html>
